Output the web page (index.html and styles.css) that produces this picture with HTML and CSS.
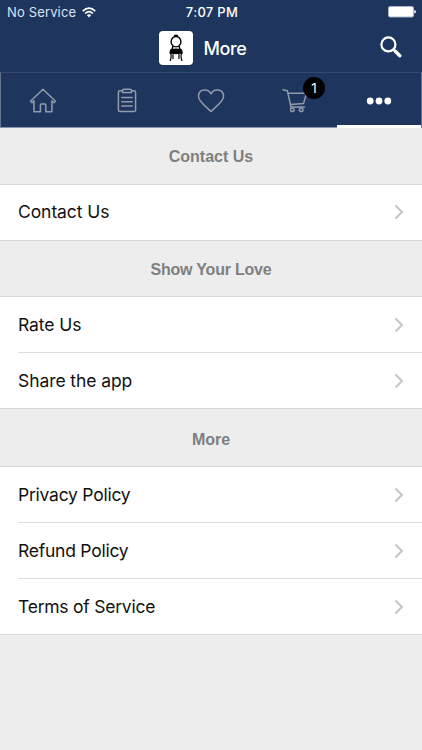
FILE: index.html
```html
<!DOCTYPE html>
<html lang="en">
<head>
<meta charset="utf-8">
<title>More</title>
<link rel="stylesheet" href="styles.css">
</head>
<body>
<header class="header">
  <div class="status">
    <div class="carrier"><span class="carrier-name">No Service</span>
      <svg class="wifi" width="14" height="11" viewBox="0 0 14 11"><g fill="none" stroke="#fff" stroke-width="1.7"><path d="M.7 4.1Q7-1.9 13.3 4.1"/><path d="M3.1 6.5Q7 2.8 10.9 6.5"/></g><path fill="#fff" d="M4.8 8.1Q7 6.3 9.2 8.1L7 10.5Z"/></svg>
    </div>
    <span class="time">7:07 PM</span>
    <svg class="battery" width="28" height="12" viewBox="0 0 28 12"><rect x=".5" y=".5" width="25" height="10.5" rx="1.6" fill="#fff" stroke="#aab4c9"/><path d="M26.3 4Q28 4.3 28 5.8T26.3 7.6Z" fill="#fff"/></svg>
  </div>
  <div class="navbar">
    <div class="brand">
      <svg class="logo" width="34" height="34" viewBox="0 0 34 34"><rect width="34" height="34" rx="4" fill="#fff"/><ellipse cx="17" cy="10.7" rx="4.9" ry="5.2" fill="none" stroke="#000" stroke-width="1.4"/><path d="M15 5.4Q17 3.2 19 5.4M14 15l-1 3.5M20 15l1 3.5" fill="none" stroke="#000" stroke-width="1.4"/><path d="M11.5 18Q17 16.8 22.5 18L23.6 20.5V23Q20 22.2 17 23.3Q14 22.2 10.6 23V20.5Z"/><path d="M11.7 22.5Q12.8 25 11.2 30M22.5 22.5Q21.4 25 23 30M14 23v5M20 23v5" fill="none" stroke="#000" stroke-width="1.2"/></svg>
      <h1 class="title">More</h1>
    </div>
    <svg class="search" width="22" height="22" viewBox="0 0 22 22" fill="none" stroke="#fff" stroke-linecap="round"><circle cx="8.4" cy="8.4" r="7" stroke-width="2.2"/><path d="M13.6 13.6L15 15" stroke-width="2.2"/><path d="M15.3 15.3l4.5 4.5" stroke-width="3.4"/></svg>
  </div>
  <nav class="tabs">
    <a class="tab"><svg width="28" height="26" viewBox="0 0 28 26"><path d="M1.5 13.2L14 1.3 26.5 13.2 25 14.7 22.9 12.8V23.8H16.8V17.1Q16.8 16.1 15.8 16.1H12.4Q11.4 16.1 11.4 17.1V23.8H5V12.8L3 14.7Z"/></svg></a>
    <a class="tab"><svg width="20" height="26" viewBox="0 0 20 26"><path d="M5.5 2.8H3Q1.4 2.8 1.4 4.4V22Q1.4 23.6 3 23.6H17Q18.6 23.6 18.6 22V4.4Q18.6 2.8 17 2.8H14.5M7 1.2H13Q14.5 1.2 14.5 2.5V4.4H5.5V2.5Q5.5 1.2 7 1.2ZM4.8 9.5H15.2M4.8 13.8H15.2M4.8 18H15.2"/></svg></a>
    <a class="tab"><svg width="28" height="26" viewBox="0 0 28 26"><path d="M14 23.5C9.7 19.3 1.5 13.2 1.5 8.4C1.5 .7 11 .1 14 5.8C17 .1 26.5 .7 26.5 8.4C26.5 13.2 18.3 19.3 14 23.5Z"/></svg></a>
    <a class="tab cart"><svg width="28" height="26" viewBox="0 0 28 26"><path d="M2 1.7L6.4 2.8 9.9 18.7M8 5.3H25.5L22.6 15.4 9.4 16.6M9.5 18.9H23.5"/><circle cx="11.3" cy="21.8" r="1.8"/><circle cx="20.2" cy="21.8" r="1.8"/></svg><span class="badge">1</span></a>
    <a class="tab active"><svg width="26" height="10" viewBox="0 0 26 10"><circle cx="4.2" cy="5" r="3.4"/><circle cx="13" cy="5" r="3.4"/><circle cx="21.8" cy="5" r="3.4"/></svg></a>
  </nav>
</header>
<main>
  <section>
    <h2 class="heading first">Contact Us</h2>
    <ul class="list contact">
      <li class="row"><span class="label">Contact Us</span><svg class="chevron" width="10" height="16" viewBox="0 0 10 16"><path d="M1.5 1.5L8 8 1.5 14.5"/></svg></li>
    </ul>
  </section>
  <section>
    <h2 class="heading love">Show Your Love</h2>
    <ul class="list">
      <li class="row"><span class="label">Rate Us</span><svg class="chevron" width="10" height="16" viewBox="0 0 10 16"><path d="M1.5 1.5L8 8 1.5 14.5"/></svg></li>
      <li class="row"><span class="label">Share the app</span><svg class="chevron" width="10" height="16" viewBox="0 0 10 16"><path d="M1.5 1.5L8 8 1.5 14.5"/></svg></li>
    </ul>
  </section>
  <section>
    <h2 class="heading last">More</h2>
    <ul class="list policies">
      <li class="row"><span class="label">Privacy Policy</span><svg class="chevron" width="10" height="16" viewBox="0 0 10 16"><path d="M1.5 1.5L8 8 1.5 14.5"/></svg></li>
      <li class="row"><span class="label">Refund Policy</span><svg class="chevron" width="10" height="16" viewBox="0 0 10 16"><path d="M1.5 1.5L8 8 1.5 14.5"/></svg></li>
      <li class="row"><span class="label">Terms of Service</span><svg class="chevron" width="10" height="16" viewBox="0 0 10 16"><path d="M1.5 1.5L8 8 1.5 14.5"/></svg></li>
    </ul>
  </section>
</main>
</body>
</html>
```
FILE: styles.css
```css
* { box-sizing: border-box; }
body {
  margin: 0;
  height: 750px;
  overflow: hidden;
  background: #ededed;
  color: #111;
  font-family: Inter, "Liberation Sans", sans-serif;
}
svg { display: block; flex: none; }
.header { background: #1e355e; color: #fff; }
.status {
  height: 24px;
  padding: 0 6px 0 7px;
  display: grid;
  grid-template-columns: 1fr auto 1fr;
  align-items: center;
  font-size: 13px;
  line-height: 24px;
}
.carrier { display: flex; align-items: center; gap: 6px; color: #dce3f1; }
.carrier-name { letter-spacing: .15px; }
.time { font-weight: 500; font-size: 13px; letter-spacing: .3px; padding-left: 1px; }
.battery { justify-self: end; }
.navbar {
  height: 48px;
  padding: 0 20px 2px 25px;
  display: flex;
  align-items: center;
}
.brand { flex: 1; display: flex; align-items: center; justify-content: center; gap: 11px; }
.logo { margin-top: 1px; }
.title { margin: 3px 0 0; font-size: 18px; font-weight: 500; letter-spacing: -.4px; line-height: 24px; }
.tabs {
  height: 56px;
  display: grid;
  grid-template-columns: repeat(5, 1fr);
  border: 1px solid #35486d;
  border-left-color: #63728e;
  border-right-color: #63728e;
  border-bottom-color: #8995aa;
}
.tab {
  position: relative;
  display: flex;
  align-items: center;
  justify-content: center;
  padding-top: 1px;
}
.tab svg { fill: none; stroke: #929baa; stroke-width: 1.5; stroke-linejoin: round; stroke-linecap: round; }
.badge {
  position: absolute;
  left: 50px;
  top: 4px;
  width: 22px;
  height: 22px;
  border-radius: 50%;
  background: #000;
  font-size: 13.5px;
  line-height: 22px;
  text-align: center;
}
.active { border-bottom: 3px solid #fff; margin-bottom: -1px; padding-top: 3px; }
.active svg { fill: #fff; stroke: none; }
.heading {
  margin: 0;
  font: bold 16px/57px "Liberation Sans", Arial, sans-serif;
  color: #7f7f7f;
  text-align: center;
}
.first { height: 56px; line-height: 58px; }
.love { height: 55px; letter-spacing: -.2px; }
.last { height: 57px; line-height: 61px; }
.list {
  margin: 0;
  padding: 0;
  list-style: none;
  background: #fff;
  border-top: 1px solid #d9d9db;
  border-bottom: 1px solid #d9d9db;
}
.row {
  height: 56px;
  margin-left: 18px;
  padding: 0 18px 0 0;
  display: flex;
  align-items: center;
  justify-content: space-between;
}
.row + .row { border-top: 1px solid #dedee0; }
.row:first-child { height: 55px; }
.contact .row { padding-bottom: 2px; }
.label { font-size: 17.5px; line-height: 24px; letter-spacing: -.08px; }
.policies .label { letter-spacing: -.24px; }
.chevron { fill: none; stroke: #c3c3c8; stroke-width: 1.9; }
```
